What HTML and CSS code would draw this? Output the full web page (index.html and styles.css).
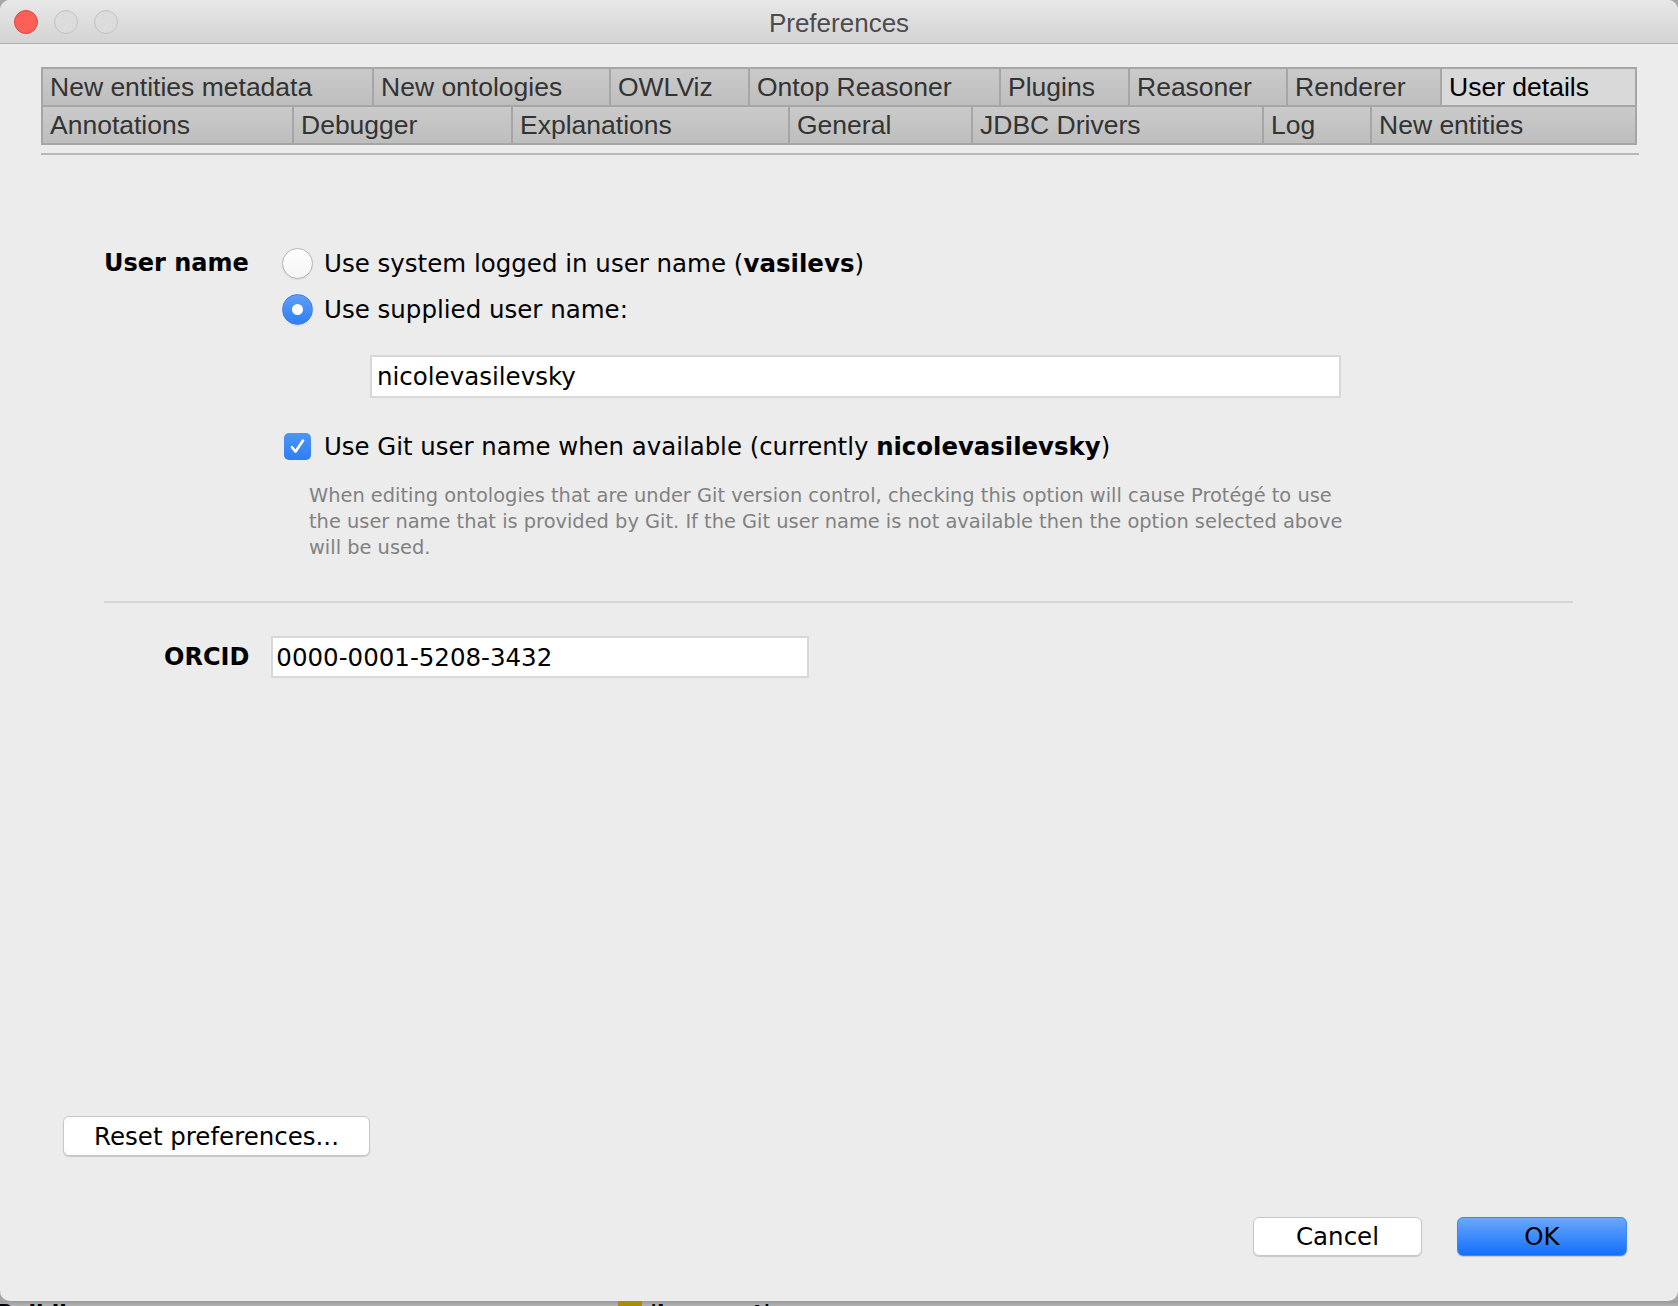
FILE: index.html
```html
<!DOCTYPE html>
<html>
<head>
<meta charset="utf-8">
<title>Preferences</title>
<link rel="stylesheet" href="styles.css">
</head>
<body>
<div class="window">
  <div class="titlebar">
    <div class="lights">
      <span class="light close"></span>
      <span class="light off"></span>
      <span class="light off"></span>
    </div>
    <div class="title">Preferences</div>
    <div></div>
  </div>

  <div class="tabs">
    <div class="tabrow row1">
      <div class="tab first">New entities metadata</div>
      <div class="tab">New ontologies</div>
      <div class="tab">OWLViz</div>
      <div class="tab">Ontop Reasoner</div>
      <div class="tab">Plugins</div>
      <div class="tab">Reasoner</div>
      <div class="tab">Renderer</div>
      <div class="tab sel">User details</div>
    </div>
    <div class="tabrow row2">
      <div class="tab first">Annotations</div>
      <div class="tab">Debugger</div>
      <div class="tab">Explanations</div>
      <div class="tab">General</div>
      <div class="tab">JDBC Drivers</div>
      <div class="tab">Log</div>
      <div class="tab">New entities</div>
    </div>
  </div>
  <div class="tabline"></div>

  <div class="panel">
    <div class="user-section">
      <div class="label">User name</div>
      <div class="options">
        <div class="opt">
          <span class="radio"></span>
          <span>Use system logged in user name (<b>vasilevs</b>)</span>
        </div>
        <div class="opt">
          <span class="radio on"></span>
          <span>Use supplied user name:</span>
        </div>
        <div class="field name-field">nicolevasilevsky</div>
        <div class="opt check-row">
          <span class="checkbox">
            <svg width="27" height="27" viewBox="0 0 27 27"><path d="M8 14.2 L11.6 18.6 L19 7.6" fill="none" stroke="#fff" stroke-width="2.6" stroke-linecap="round" stroke-linejoin="round"/></svg>
          </span>
          <span class="git-text">Use Git user name when available (currently <b>nicolevasilevsky</b>)</span>
        </div>
        <div class="desc">When editing ontologies that are under Git version control, checking this option will cause Protégé to use<br>the user name that is provided by Git. If the Git user name is not available then the option selected above<br>will be used.</div>
      </div>
    </div>

    <div class="sep"></div>

    <div class="orcid-row">
      <div class="orcid-label">ORCID</div>
      <div class="field orcid-field">0000-0001-5208-3432</div>
    </div>

    <div class="spacer"></div>

    <div class="reset-row">
      <div class="btn reset">Reset preferences...</div>
    </div>

    <div class="btnrow">
      <div class="btn cancel">Cancel</div>
      <div class="btn ok">OK</div>
    </div>
  </div>
</div>
<div class="behind">
  <span class="b1">Building</span>
  <span class="b2"></span>
  <span class="b3">'has_part' <span class="some">some</span></span>
</div>
</body>
</html>
```

FILE: styles.css
```css
* { box-sizing: border-box; }

html, body {
  margin: 0;
  padding: 0;
}

body {
  width: 1678px;
  height: 1306px;
  overflow: hidden;
  background: #a7a7a7;
  font-family: "DejaVu Sans", "Liberation Sans", sans-serif;
  font-size: 24.5px;
  color: #000;
}

.window {
  width: 1678px;
  height: 1301px;
  background: #ececec;
  border-radius: 10px;
  overflow: hidden;
  display: flex;
  flex-direction: column;
}

/* title bar */
.titlebar {
  flex: none;
  height: 44px;
  display: grid;
  grid-template-columns: 1fr auto 1fr;
  align-items: center;
  background: linear-gradient(#e9e8e9, #d4d3d4);
  border-bottom: 1px solid #b2b2b2;
}

.lights {
  display: flex;
  gap: 16px;
  padding-left: 14px;
}

.light {
  width: 24px;
  height: 24px;
  border-radius: 50%;
}

.light.close {
  background: #fc5f57;
  border: 1px solid #e04741;
}

.light.off {
  background: #dddcdd;
  border: 1px solid #c3c2c3;
}

.title {
  font-family: "Liberation Sans", Arial, sans-serif;
  font-size: 26px;
  color: #4c4c4c;
  padding-top: 3px;
}

/* tabs */
.tabs {
  margin: 23px 0 0 41px;
  width: 1596px;
}

.tabrow {
  display: grid;
}

.row1 {
  grid-template-columns: 333px 237px 139px 251px 129px 158px 154px 195px;
  border-top: 2px solid #a6a6a6;
  height: 40px;
}

.row2 {
  grid-template-columns: 253px 219px 277px 183px 291px 108px 265px;
  height: 38px;
}

.tab {
  display: flex;
  align-items: center;
  padding-left: 7px;
  background: linear-gradient(#cacaca, #bebebe);
  border-right: 2px solid #a6a6a6;
  border-bottom: 2px solid #a6a6a6;
  font-family: "Liberation Sans", Arial, sans-serif;
  font-size: 26.5px;
  color: #333;
  white-space: nowrap;
}

.tab.first {
  border-left: 2px solid #a6a6a6;
}

.tab.sel {
  background: #d9d9d9;
  color: #000;
}

.tabline {
  margin: 8px 0 0 41px;
  width: 1598px;
  height: 2px;
  background: #b9b9b9;
}

/* panel */
.panel {
  flex: 1;
  display: flex;
  flex-direction: column;
  padding: 0 51px 45px 0;
}

.user-section {
  display: flex;
  margin: 85px 0 0 104px;
}

.label {
  width: 178px;
  height: 46px;
  display: flex;
  align-items: center;
  font-weight: bold;
  font-size: 24px;
}

.options {
  display: flex;
  flex-direction: column;
}

.opt {
  height: 46px;
  display: flex;
  align-items: center;
  gap: 11px;
  white-space: nowrap;
}

.radio {
  width: 31px;
  height: 31px;
  border-radius: 50%;
  background: linear-gradient(#ffffff, #f4f4f4);
  border: 1px solid #b4b4b4;
  box-shadow: 0 1px 1px rgba(0, 0, 0, 0.08);
  display: flex;
  align-items: center;
  justify-content: center;
}

.radio.on {
  background: linear-gradient(#5e9ff9, #2f7ef4);
  border-color: #3c81e6;
}

.radio.on::after {
  content: "";
  width: 11px;
  height: 11px;
  border-radius: 50%;
  background: #fff;
}

.field {
  background: #fff;
  border: 2px solid #d8d8d8;
  display: flex;
  align-items: center;
  padding-left: 5px;
  white-space: nowrap;
}

.name-field {
  margin: 23px 0 0 88px;
  width: 971px;
  height: 43px;
}

.check-row {
  margin-top: 25px;
  padding-left: 2px;
  gap: 13px;
}

.git-text {
  font-size: 24.4px;
}

.checkbox {
  width: 27px;
  height: 27px;
  border-radius: 5px;
  background: linear-gradient(#4d95f8, #2f7df4);
  display: flex;
}

.desc {
  margin: 14px 0 0 27px;
  font-size: 19.4px;
  line-height: 26px;
  color: #818181;
  white-space: nowrap;
}

.sep {
  margin: 40px 0 0 104px;
  width: 1469px;
  height: 2px;
  background: #d5d5d5;
}

.orcid-row {
  display: flex;
  align-items: center;
  gap: 22px;
  margin: 33px 0 0 164px;
}

.orcid-label {
  font-weight: bold;
  font-size: 24px;
}

.orcid-field {
  width: 538px;
  height: 42px;
  padding-left: 3px;
}

.spacer {
  flex: 1;
}

.reset-row {
  display: flex;
  padding-left: 63px;
}

.btn {
  display: flex;
  align-items: center;
  justify-content: center;
  height: 40px;
  border-radius: 6px;
  background: #fff;
  border: 1px solid #c8c8c8;
  box-shadow: 0 1px 1px rgba(0, 0, 0, 0.15);
  white-space: nowrap;
}

.reset {
  width: 307px;
}

.btnrow {
  display: flex;
  justify-content: flex-end;
  gap: 35px;
  margin-top: 61px;
}

.cancel {
  width: 169px;
  height: 39px;
}

.ok {
  width: 170px;
  height: 39px;
  background: linear-gradient(#6aa8fc, #136ffb);
  border-color: #3f86f2;
}

/* window behind */
.behind {
  height: 5px;
  overflow: hidden;
  display: flex;
  background: linear-gradient(#999999, #b4b4b4);
  font-size: 22px;
  font-weight: bold;
  line-height: 22px;
  white-space: nowrap;
}

.b1 {
  margin-left: -4px;
  padding-top: 1px;
}

.b2 {
  margin-left: 520px;
  width: 24px;
  height: 5px;
  background: #b08a00;
}

.b3 {
  margin-left: 8px;
  padding-top: 1px;
}

.some {
  color: #8a1a8a;
}
```
